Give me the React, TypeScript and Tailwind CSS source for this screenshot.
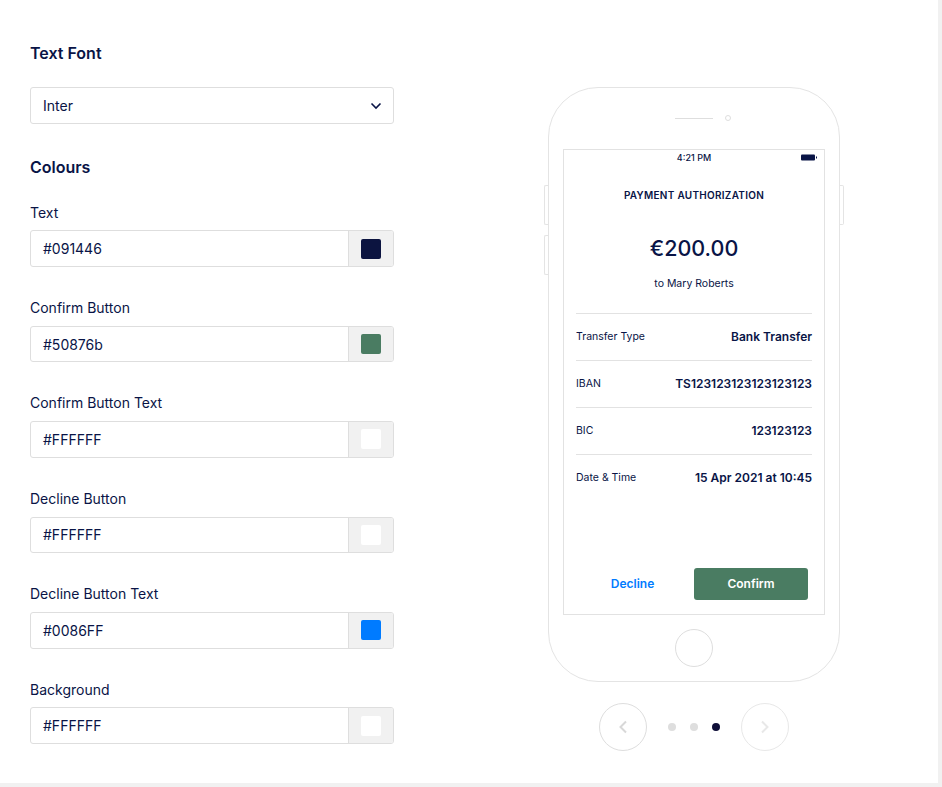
const INK = "text-[#091446]";

const colours = [
  { label: "Text", value: "#091446", swatch: "bg-[#0c1440]" },
  { label: "Confirm Button", value: "#50876b", swatch: "bg-[#4a7c62]" },
  { label: "Confirm Button Text", value: "#FFFFFF", swatch: "bg-white" },
  { label: "Decline Button", value: "#FFFFFF", swatch: "bg-white" },
  { label: "Decline Button Text", value: "#0086FF", swatch: "bg-[#007bff]" },
  { label: "Background", value: "#FFFFFF", swatch: "bg-white" },
];

const details = [
  { label: "Transfer Type", value: "Bank Transfer" },
  { label: "IBAN", value: "TS123123123123123123" },
  { label: "BIC", value: "123123123" },
  { label: "Date & Time", value: "15 Apr 2021 at 10:45" },
];

function ColourField({ label, value, swatch }: { label: string; value: string; swatch: string }) {
  return (
    <div className="flex flex-col">
      <label className="h-[21px] text-[14px] leading-[21px]">{label}</label>
      <div className="mt-[7.8px] flex h-[36.6px] overflow-hidden rounded-[3px] border border-[#dedede]">
        <div className="flex flex-1 items-center pl-3 text-[14px]">{value}</div>
        <div className="flex w-[45px] items-center justify-center border-l border-[#dedede] bg-[#f1f1f1]">
          <div className={`h-5 w-5 rounded-[2px] ${swatch}`} />
        </div>
      </div>
    </div>
  );
}

function Phone() {
  return (
    <div className="relative flex h-[595px] w-[292px] flex-col items-center rounded-[50px] border-[1.5px] border-[#e4e4e4] bg-white">
      <div className="absolute -left-[5px] top-[97px] h-[40px] w-[4px] rounded-l-[2px] border border-r-0 border-[#e4e4e4]" />
      <div className="absolute -left-[5px] top-[147px] h-[40px] w-[4px] rounded-l-[2px] border border-r-0 border-[#e4e4e4]" />
      <div className="absolute -right-[5px] top-[97px] h-[40px] w-[4px] rounded-r-[2px] border border-l-0 border-[#e4e4e4]" />

      <div className="mt-[27px] ml-[18px] flex h-[6px] items-center">
        <div className="h-px w-[38px] bg-[#dedede]" />
        <div className="ml-3 h-[6px] w-[6px] rounded-full border border-[#dedede]" />
      </div>

      <div className="mt-[28px] flex h-[466px] w-[262px] flex-col border border-[#e2e2e2] px-3">
        <div className="relative flex h-[15px] items-center justify-center text-[9px] font-medium text-[#091446]">
          4:21 PM
          <svg className="absolute -right-[6px] top-[4px]" width="17" height="7" viewBox="0 0 17 7">
            <rect x="0" y="0.5" width="14" height="6" rx="1" fill="#091446" />
            <rect x="15" y="2.5" width="1" height="2" fill="#091446" />
          </svg>
        </div>
        <div className="mt-[23px] text-center text-[10px] leading-[14px] font-semibold tracking-[0.28px]">PAYMENT AUTHORIZATION</div>
        <div className="mt-[30px] text-center text-[21.5px] leading-[32px] font-medium">€200.00</div>
        <div className="mt-[13px] text-center text-[10.5px] leading-[14px]">to Mary Roberts</div>

        <div className="mt-[22px] flex flex-col">
          {details.map((row) => (
            <div key={row.label} className="flex h-[47px] items-center justify-between border-t border-[#e2e2e2]">
              <span className="text-[10.5px]">{row.label}</span>
              <span className="text-[12px] font-semibold">{row.value}</span>
            </div>
          ))}
        </div>

        <div className="mt-auto mb-[14px] flex items-center pr-1">
          <div className="flex-1 pr-[5px] text-center text-[12px] font-semibold text-[#007bff]">Decline</div>
          <button className="h-8 w-[114px] rounded-[3px] bg-[#4a7c62] text-[12px] font-semibold text-white">Confirm</button>
        </div>
      </div>

      <div className="mt-[14px] h-[38px] w-[38px] rounded-full border border-[#dedede]" />
    </div>
  );
}

function Pager() {
  return (
    <div className="mt-[21px] flex items-center">
      <button className="flex h-12 w-12 items-center justify-center rounded-full border border-[#dedede]">
        <svg width="12" height="14" viewBox="0 0 12 14" fill="none" stroke="#d8d8d8" strokeWidth="2">
          <path d="M9 1.5 3.5 7 9 12.5" />
        </svg>
      </button>
      <div className="mx-[21px] flex items-center gap-[14px]">
        <div className="h-2 w-2 rounded-full bg-[#dedede]" />
        <div className="h-2 w-2 rounded-full bg-[#dedede]" />
        <div className="h-2 w-2 rounded-full bg-[#0f0f38]" />
      </div>
      <button className="flex h-12 w-12 items-center justify-center rounded-full border border-[#e8e8e8]">
        <svg width="12" height="14" viewBox="0 0 12 14" fill="none" stroke="#e8e8e8" strokeWidth="2">
          <path d="M3 1.5 8.5 7 3 12.5" />
        </svg>
      </button>
    </div>
  );
}

export default function App() {
  return (
    <div className={`h-[787px] w-[942px] overflow-hidden bg-[#f1f1f1] font-['Inter',sans-serif] ${INK}`}>
      <div className="flex h-[783px] w-[938px] bg-white">
        <div className="ml-[30px] w-[364px] pt-[43px]">
          <h2 className="text-[16px] leading-[20px] font-semibold">Text Font</h2>
          <div className="mt-[24px] flex h-[37px] items-center justify-between rounded-[3px] border border-[#dedede] pr-[11px] pl-3 text-[14px]">
            Inter
            <svg width="12" height="8" viewBox="0 0 12 8" fill="none" stroke="#091446" strokeWidth="1.6">
              <path d="M1.5 1.5 6 6l4.5-4.5" />
            </svg>
          </div>
          <h2 className="mt-[33px] text-[16px] leading-[20px] font-semibold">Colours</h2>
          <div className="mt-[24.6px] flex flex-col gap-[30px]">
            {colours.map((c) => (
              <ColourField key={c.label} {...c} />
            ))}
          </div>
        </div>
        <div className="ml-[154px] flex flex-col items-center pt-[87px]">
          <Phone />
          <Pager />
        </div>
      </div>
    </div>
  );
}
